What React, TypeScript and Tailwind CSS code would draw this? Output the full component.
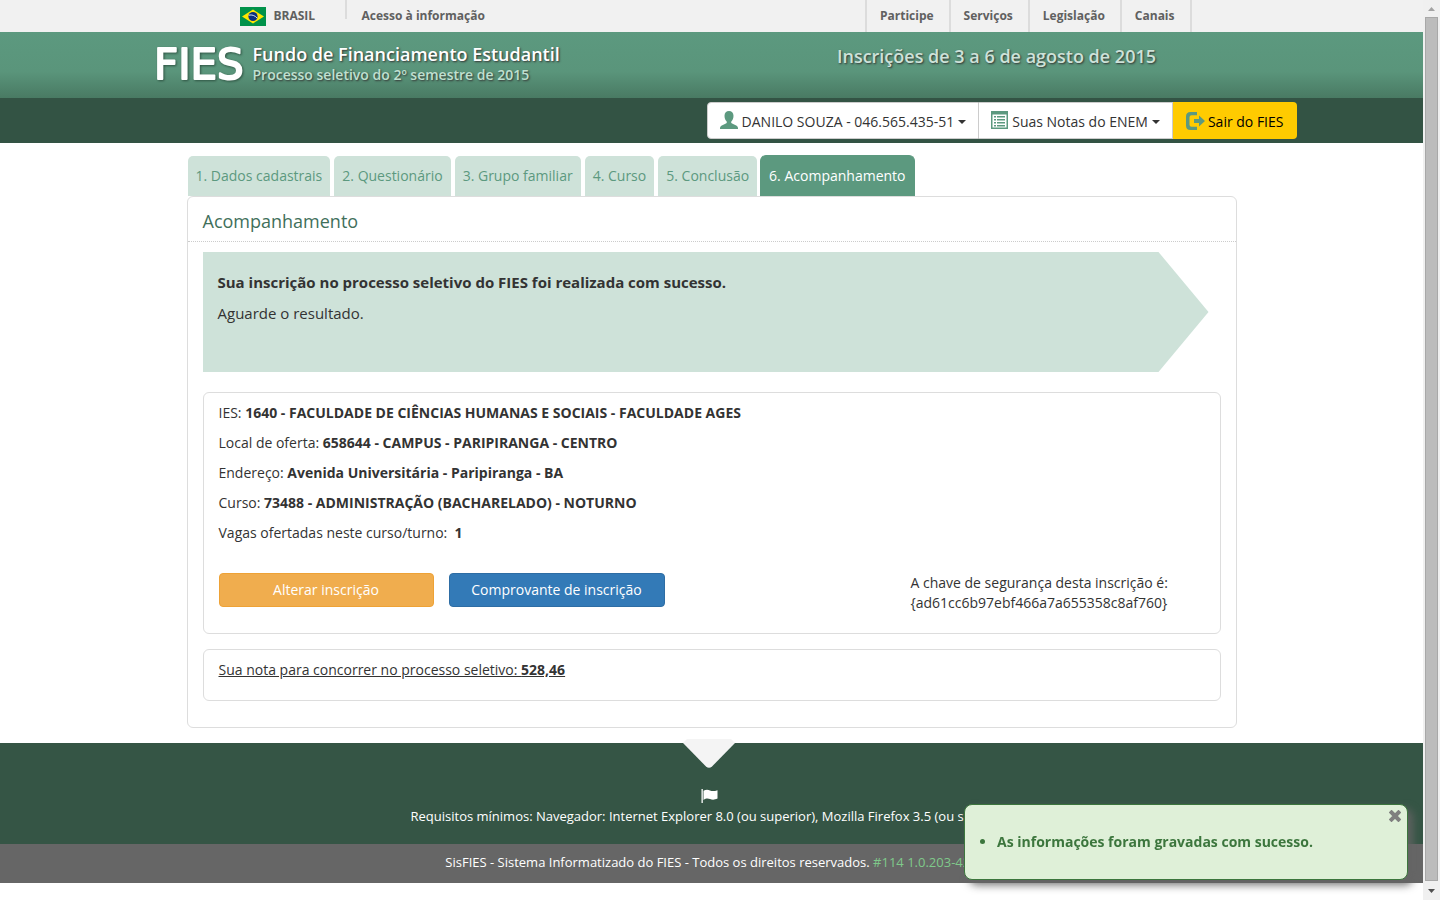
import type { ReactNode } from 'react'

const TOP_LINKS = ['Participe', 'Serviços', 'Legislação', 'Canais']

const STEPS = [
  'Dados cadastrais',
  'Questionário',
  'Grupo familiar',
  'Curso',
  'Conclusão',
  'Acompanhamento',
]

const CURRENT_STEP = 6

const DETAILS = [
  { label: 'IES:', value: '1640 - FACULDADE DE CIÊNCIAS HUMANAS E SOCIAIS - FACULDADE AGES' },
  { label: 'Local de oferta:', value: '658644 - CAMPUS - PARIPIRANGA - CENTRO' },
  { label: 'Endereço:', value: 'Avenida Universitária - Paripiranga - BA' },
  { label: 'Curso:', value: '73488 - ADMINISTRAÇÃO (BACHARELADO) - NOTURNO' },
  { label: 'Vagas ofertadas neste curso/turno:\u00a0', value: '1' },
]

function BrazilFlag() {
  return (
    <svg className="h-[19px] w-[26px]" viewBox="0 0 26 19" aria-hidden="true">
      <rect width="26" height="19" fill="#00924a" />
      <path d="M13 2.5 24 9.5 13 16.5 2 9.5z" fill="#ffe600" />
      <circle cx="13" cy="9.5" r="4.6" fill="#0b2f7f" />
      <path d="M8.8 8.2c3-.7 6.2.2 8.3 2.9" stroke="#cfe0f5" strokeWidth="1" fill="none" />
    </svg>
  )
}

function FiesLogo() {
  return (
    <svg
      className="h-[66px] w-[90px] overflow-visible drop-shadow-[1px_1px_1px_#2f5443] [text-shadow:none]"
      viewBox="0 0 90 66"
      role="img"
      aria-label="FIES"
    >
      <text
        x="-3"
        y="47"
        fill="#fff"
        stroke="#fff"
        strokeWidth="2"
        strokeLinejoin="round"
        className="font-['DejaVu_Sans',sans-serif] text-[42px] font-normal"
      >
        FIES
      </text>
    </svg>
  )
}

function UserIcon() {
  return (
    <svg className="h-[18px] w-[18px]" viewBox="0 0 18 18" fill="currentColor" aria-hidden="true">
      <path d="M9 0c2.7 0 4.5 1.9 4.5 4.7 0 2.3-.8 4.4-2 5.5-.4.4-.5 1.6.1 2l4.6 2.2c1.2.6 1.8 1.6 1.8 2.7V18H0v-.9c0-1.1.6-2.1 1.8-2.7l4.6-2.2c.6-.4.5-1.6.1-2-1.2-1.1-2-3.2-2-5.5C4.5 1.9 6.3 0 9 0z" />
    </svg>
  )
}

function ListIcon() {
  return (
    <svg className="h-[18px] w-[17px]" viewBox="0 0 17 18" fill="currentColor" aria-hidden="true">
      <path
        fillRule="evenodd"
        d="M0 0h17v18H0zM1.5 3.5v13h14v-13zM3 5h2v1.5H3zM6 5h8v1.5H6zM3 8h2v1.5H3zM6 8h8v1.5H6zM3 11h2v1.5H3zM6 11h8v1.5H6zM3 14h2v1.5H3zM6 14h8v1.5H6z"
      />
    </svg>
  )
}

function LogoutIcon() {
  return (
    <svg className="h-[18px] w-[19px]" viewBox="0 0 19 18" fill="currentColor" aria-hidden="true">
      <path d="M11 0v3.2H5.5Q3.5 3.2 3.5 5.2v7.6Q3.5 14.8 5.5 14.8H11V18H4.5Q0 18 0 13.5v-9Q0 0 4.5 0z" />
      <path d="M13 3.5 19 9l-6 5.5V11H8V7h5z" />
    </svg>
  )
}

function FlagIcon() {
  return (
    <svg className="h-[14px] w-[17px]" viewBox="0 0 17 14" fill="currentColor" aria-hidden="true">
      <path d="M.5 0h1.3v14H.5z" />
      <path d="M2.5 1.8C5 .3 7 .6 9 1.4c2 .9 4 1 7.500-.2v8.3c-3 1.500-5.300 1.300-7.500.6-2-.7-4-.8-6.500.8z" />
    </svg>
  )
}

function Caret() {
  return (
    <span className="ml-1 inline-block border-x-4 border-t-4 border-x-transparent border-t-[#333]" />
  )
}

function NavButton({ icon, children }: { icon: ReactNode; children: ReactNode }) {
  return (
    <button
      type="button"
      className="flex items-center border border-l-0 border-[#ccc] bg-white px-3 pt-0.5 text-[#333] first:rounded-l first:border-l"
    >
      <span className="mr-1 -mt-1 text-[#5c997f]">{icon}</span>
      {children}
      <Caret />
    </button>
  )
}

function BrasilBar() {
  return (
    <div className="bg-[#f1f1f1] text-xs font-bold text-[#606060]">
      <div className="mx-auto flex h-8 max-w-[960px] justify-between pl-2">
        <div className="flex">
          <a href="#brasil" className="flex w-[105px] items-center gap-2">
            <BrazilFlag />
            BRASIL
          </a>
          <a href="#acesso" className="h-[19px] border-l-2 border-[#dcdcdc] pl-[15px] leading-8">
            Acesso à informação
          </a>
        </div>
        <nav className="flex border-r-2 border-[#dcdcdc]">
          {TOP_LINKS.map((link) => (
            <a
              key={link}
              href={`#${link.toLowerCase()}`}
              className="border-l-2 border-[#dcdcdc] pr-[15px] pl-[13px] leading-8"
            >
              {link}
            </a>
          ))}
        </nav>
      </div>
    </div>
  )
}

function Header() {
  return (
    <header>
      <div className="bg-linear-to-b from-[#5c997f] via-[#5a957b] via-60% to-[#497a63]">
        <div className="mx-auto grid h-[66px] max-w-[1140px] grid-cols-2 font-semibold [text-shadow:1px_1px_2px_#333]">
          <div className="flex gap-[6px] pl-[15px]">
            <FiesLogo />
            <div className="pt-[11px]">
              <h1 className="text-lg leading-[22px] text-white">Fundo de Financiamento Estudantil</h1>
              <p className="text-sm leading-5 text-[#bfe0d0]">
                Processo seletivo do 2º semestre de 2015
              </p>
            </div>
          </div>
          <p className="pt-3 text-center text-lg leading-6 text-[#cde2d9]">
            Inscrições de 3 a 6 de agosto de 2015
          </p>
        </div>
      </div>
      <div className="bg-[#335344]">
        <div className="mx-auto flex h-[45px] max-w-[1170px] justify-end py-1 text-sm">
          <div className="flex">
            <NavButton icon={<UserIcon />}>DANILO SOUZA - 046.565.435-51</NavButton>
            <NavButton icon={<ListIcon />}>Suas Notas do ENEM</NavButton>
          </div>
          <a href="#sair" className="flex items-center rounded-r bg-[#ffcb00] px-[13px] pt-0.5 text-black">
            <span className="mr-[3px] -mt-0.5 text-[#5c997f]">
              <LogoutIcon />
            </span>
            Sair do FIES
          </a>
        </div>
      </div>
    </header>
  )
}

function StepTabs() {
  return (
    <nav className="flex gap-0.5 text-sm leading-10">
      {STEPS.map((step, i) => {
        const active = i + 1 === CURRENT_STEP
        return (
          <a
            key={step}
            href={`#passo-${i + 1}`}
            className={
              active
                ? 'rounded-t-md border border-b-0 border-[#5c997f] bg-[#5c997f] px-2 text-white'
                : 'rounded-t-md border border-b-0 border-transparent bg-[#cee2d9] bg-clip-padding px-2 text-[#5c997f]'
            }
          >
            {i + 1}. {step}
          </a>
        )
      })}
    </nav>
  )
}

function Toast() {
  return (
    <div
      role="alert"
      className="fixed right-8 bottom-5 w-[444px] rounded-lg border border-[#3c763d] bg-[#dff0d8] px-[14px] py-[27px] text-sm font-bold text-[#3c763d] shadow-[5px_5px_8px_rgba(100,100,100,0.9)]"
    >
      <button type="button" aria-label="Fechar" className="absolute top-[5px] right-[6px] text-[#7f7f7f]">
        <svg className="h-3 w-3" viewBox="0 0 12 12" stroke="currentColor" aria-hidden="true">
          <path d="M2.5 2.5l7 7M9.5 2.5l-7 7" strokeWidth="4" strokeLinecap="square" />
        </svg>
      </button>
      <ul className="list-disc pl-[18px] leading-5">
        <li>As informações foram gravadas com sucesso.</li>
      </ul>
    </div>
  )
}

function ScrollRail() {
  return (
    <div className="flex w-[17px] shrink-0 flex-col items-center bg-[#f0f0f0]" aria-hidden="true">
      <svg className="h-[17px] w-[17px]" viewBox="0 0 17 17">
        <path d="M5 11l3.5-4 3.5 4z" fill="#a3a3a3" />
      </svg>
      <div className="w-[13px] flex-1 border border-[#a8a8a8] bg-[#bcbcbc]" />
      <svg className="h-[19px] w-[17px]" viewBox="0 0 17 19">
        <path d="M5 8h7l-3.5 4z" fill="#505050" />
      </svg>
    </div>
  )
}

function App() {
  return (
    <div className="flex min-h-screen bg-white font-['Open_Sans',sans-serif] text-[#333]">
      <div className="min-w-0 flex-1">
        <BrasilBar />
        <Header />

        <main className="mx-auto max-w-[1050px] pt-3 pb-[15px]">
          <StepTabs />
          <section className="rounded-md border border-[#ddd] pb-[26px]">
            <h2 className="border-b border-dotted border-[#ccc] px-[15px] pt-3 pb-2 text-lg leading-6 text-[#3f705b]">
              Acompanhamento
            </h2>
            <div className="px-[15px] pt-[10px]">
              <div className="mr-3 h-[120px] bg-[#cee2d9] px-[15px] pt-5 text-[15px] leading-[21px] [clip-path:polygon(0_0,calc(100%_-_50px)_0,100%_50%,calc(100%_-_50px)_100%,0_100%)]">
                <p className="font-bold">
                  Sua inscrição no processo seletivo do FIES foi realizada com sucesso.
                </p>
                <p className="mt-[10px]">Aguarde o resultado.</p>
              </div>

              <div className="mt-5 rounded-md border border-[#ddd] px-[15px] pt-[10px] pb-5 text-sm leading-5">
                <div className="space-y-[10px]">
                  {DETAILS.map(({ label, value }) => (
                    <p key={label}>
                      {label} <strong>{value}</strong>
                    </p>
                  ))}
                </div>
                <div className="mt-[30px] flex justify-between">
                  <div className="flex gap-[15px]">
                    <button
                      type="button"
                      className="h-[34px] w-[215px] rounded border border-[#eea236] bg-[#f0ad4e] text-white"
                    >
                      Alterar inscrição
                    </button>
                    <button
                      type="button"
                      className="h-[34px] w-[216px] rounded border border-[#2e6da4] bg-[#337ab7] text-white"
                    >
                      Comprovante de inscrição
                    </button>
                  </div>
                  <p className="w-[294px]">
                    A chave de segurança desta inscrição é:
                    <br />
                    {'{ad61cc6b97ebf466a7a655358c8af760}'}
                  </p>
                </div>
              </div>

              <div className="mt-[15px] rounded-md border border-[#ddd] px-[15px] pt-[10px] pb-5 text-sm leading-5">
                <p className="underline">
                  Sua nota para concorrer no processo seletivo: <strong>528,46</strong>
                </p>
              </div>
            </div>
          </section>
        </main>

        <footer className="text-center text-[13px] leading-5 text-white">
          <div className="relative flex flex-col items-center bg-[#355545] pt-[46px] pb-[18px]">
            <svg
              className="absolute -top-1 left-1/2 h-[29px] w-[52px] -translate-x-[29px]"
              viewBox="0 0 52 29"
              aria-hidden="true"
            >
              <path d="M4 0h44l4 4-23 23.5Q26 30 23 27.5L0 4z" fill="#f4f4f4" />
            </svg>
            <span className="mr-1 mb-[3px]">
              <FlagIcon />
            </span>
            <p>
              Requisitos mínimos: Navegador: Internet Explorer 8.0 (ou superior), Mozilla Firefox 3.5
              (ou superior)
            </p>
          </div>
          <div className="bg-[#666] pt-2 pb-[11px]">
            SisFIES - Sistema Informatizado do FIES - Todos os direitos reservados.{' '}
            <span className="text-[#7fc98a]">#114 1.0.203-426</span>
          </div>
        </footer>
      </div>
      <ScrollRail />
      <Toast />
    </div>
  )
}

export default App
